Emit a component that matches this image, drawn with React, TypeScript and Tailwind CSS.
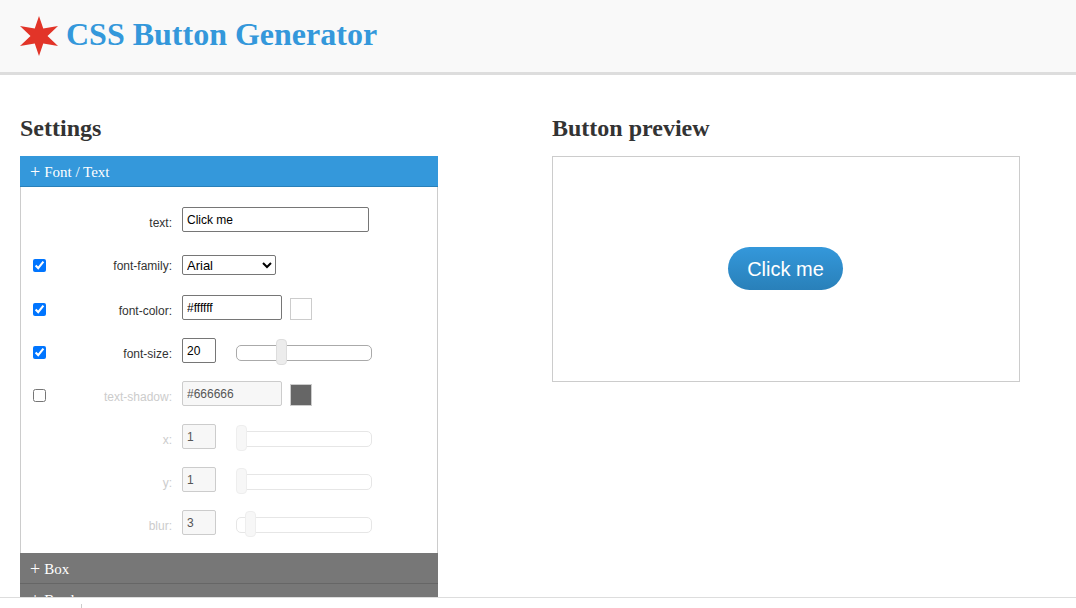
import React from "react";

const sans = "font-['Liberation_Sans',Arial,sans-serif]";
const serif = "font-['Liberation_Serif','Times_New_Roman',serif]";

function Slider({ left, off }: { left: number; off?: boolean }) {
  return (
    <div className={`relative ml-5 h-[16px] w-[136px] translate-y-[2px] rounded-[5px] border bg-white ${off ? "border-[#e6e6e6]" : "border-[#aaaaaa]"}`}>
      <div
        className={`absolute top-[-7px] h-[26px] w-[11px] rounded-[4px] border ${off ? "border-[#eeeeee] bg-[#f7f7f7]" : "border-[#dddddd] bg-[#ececec]"}`}
        style={{ left }}
      />
    </div>
  );
}

function Row({ label, check, off, tight, children }: { label: string; check?: boolean; off?: boolean; tight?: boolean; children: React.ReactNode }) {
  return (
    <div className={`flex items-center ${tight ? "h-[42px]" : "h-[43px]"}`}>
      <div className="flex w-[32px] shrink-0 justify-end">
        {check !== undefined && (
          <input
            type="checkbox"
            readOnly
            checked={check}
            className={`m-0 h-[13px] w-[13px] translate-x-[-7px] ${tight ? "" : "translate-y-[2px]"}`}
          />
        )}
      </div>
      <label className={`w-[119px] shrink-0 text-right text-[12px] ${tight ? "translate-y-[1px]" : "translate-y-[3px]"} ${off ? "text-[#cccccc]" : "text-[#333333]"}`}>{label}</label>
      <div className="ml-[10px] flex items-center">{children}</div>
    </div>
  );
}

function Field({ value, w, off }: { value: string; w: string; off?: boolean }) {
  return (
    <input
      readOnly
      value={value}
      className={`h-[25px] ${w} rounded-[2px] border px-1 text-[12px] outline-none ${off ? "border-[#cccccc] bg-[#f7f7f7] text-[#555555]" : "border-[#767676] bg-white text-black"}`}
    />
  );
}

function Swatch({ color }: { color: string }) {
  return <div className="ml-2 h-[22px] w-[22px] translate-y-[1px] border border-[#cccccc]" style={{ background: color }} />;
}

function Section({ label, active }: { label: string; active?: boolean }) {
  return (
    <div className={`flex h-[31px] items-center border-b pl-[10px] pt-[2px] text-[15px] text-white ${active ? "border-[#2980b9] bg-[#3498db]" : "border-[#666666] bg-[#777777]"}`}>
      <span className="mr-1 text-[18px] leading-none">+</span> {label}
    </div>
  );
}

export default function App() {
  return (
    <div className={`relative h-[608px] w-[1076px] overflow-hidden bg-white ${sans}`}>
      <header className="flex h-[75px] items-center border-b-[3px] border-[#dddddd] bg-[#f9f9f9] pl-5">
        <svg width="38" height="40" viewBox="0 0 38 40" className="shrink-0">
          <polygon
            fill="#e23428"
            points="19,0 23.25,12.6 38,10 27.5,20 38,30 23.25,27.4 19,40 14.75,27.4 0,30 10.5,20 0,10 14.75,12.6"
          />
        </svg>
        <h1 className={`mb-[4px] ml-2 text-[32px] font-bold text-[#3498db] ${serif}`}>CSS Button Generator</h1>
      </header>

      <main className="flex pl-5 pt-[38px]">
        <section className="w-[418px] shrink-0">
          <h2 className={`mb-[13px] h-[30px] text-[24px] leading-[30px] font-bold text-[#333333] ${serif}`}>Settings</h2>
          <div className={serif}>
            <Section label="Font / Text" active />
          </div>
          <div className="border-x border-[#cccccc] pt-[11px] pb-[9px]">
            <Row label="text:">
              <Field value="Click me" w="w-[187px]" />
            </Row>
            <div className="h-[3px]" />
            <Row label="font-family:" check tight>
              <select className="h-[20px] w-[94px] rounded-[2px] border border-[#767676] bg-white text-[13px] text-black">
                <option>Arial</option>
              </select>
            </Row>
            <Row label="font-color:" check>
              <Field value="#ffffff" w="w-[100px]" />
              <Swatch color="#ffffff" />
            </Row>
            <Row label="font-size:" check>
              <Field value="20" w="w-[34px]" />
              <Slider left={39} />
            </Row>
            <Row label="text-shadow:" check={false} off>
              <Field value="#666666" w="w-[100px]" off />
              <Swatch color="#666666" />
            </Row>
            <Row label="x:" off>
              <Field value="1" w="w-[34px]" off />
              <Slider left={-1} off />
            </Row>
            <Row label="y:" off>
              <Field value="1" w="w-[34px]" off />
              <Slider left={-1} off />
            </Row>
            <Row label="blur:" off>
              <Field value="3" w="w-[34px]" off />
              <Slider left={8} off />
            </Row>
          </div>
          <div className={serif}>
            <Section label="Box" />
            <Section label="Border" />
          </div>
        </section>

        <section className="ml-[114px] w-[468px] shrink-0">
          <h2 className={`mb-[13px] h-[30px] text-[24px] leading-[30px] font-bold text-[#333333] ${serif}`}>Button preview</h2>
          <div className="flex h-[226px] items-center justify-center border border-[#cccccc] pr-px pb-px">
            <button className="h-[43px] w-[115px] rounded-[22px] bg-gradient-to-b from-[#3498db] to-[#2980b9] text-[20px] text-white">
              Click me
            </button>
          </div>
        </section>
      </main>

      <div className="absolute inset-x-0 bottom-0 h-[11px] border-t border-[#dddddd] bg-white">
        <div className="absolute left-[81px] top-[6px] h-[4px] w-px bg-[#cccccc]" />
      </div>
    </div>
  );
}
